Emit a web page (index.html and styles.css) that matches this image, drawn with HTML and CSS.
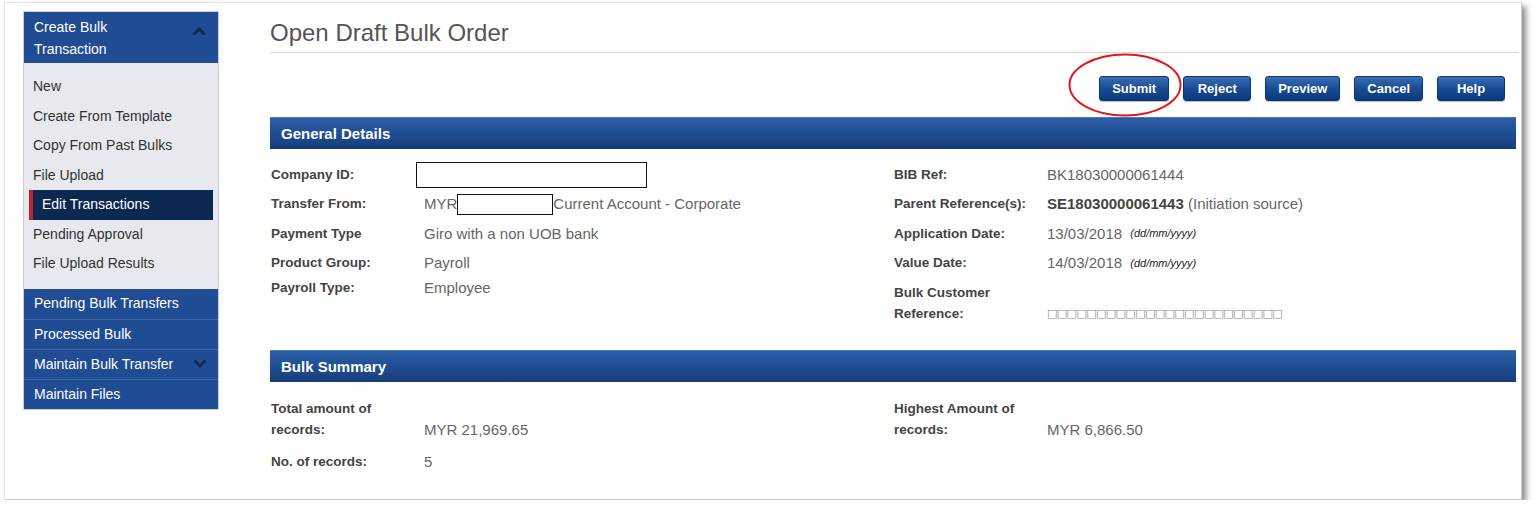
FILE: index.html
```html
<!DOCTYPE html>
<html lang="en">
<head>
  <meta charset="UTF-8">
  <title>Open Draft Bulk Order</title>
  <link rel="stylesheet" href="styles.css">
</head>
<body>
  <div class="frame">
    <aside class="sidebar">
      <div class="side-head">
        <span>Create Bulk Transaction</span>
        <svg class="chev" viewBox="0 0 14 9" width="14" height="9"><path d="M1.5 7.5 L7 2 L12.5 7.5" fill="none" stroke="#0b2850" stroke-width="2.8"/></svg>
      </div>
      <ul class="sub-menu">
        <li>New</li>
        <li>Create From Template</li>
        <li>Copy From Past Bulks</li>
        <li>File Upload</li>
        <li class="active">Edit Transactions</li>
        <li>Pending Approval</li>
        <li>File Upload Results</li>
      </ul>
      <ul class="main-menu">
        <li>Pending Bulk Transfers</li>
        <li>Processed Bulk</li>
        <li>Maintain Bulk Transfer <svg class="chev" viewBox="0 0 14 9" width="14" height="9"><path d="M1.5 1.5 L7 7 L12.5 1.5" fill="none" stroke="#0b2850" stroke-width="2.8"/></svg></li>
        <li>Maintain Files</li>
      </ul>
    </aside>

    <main class="content">
      <h1 class="page-title">Open Draft Bulk Order</h1>

      <div class="toolbar">
        <span class="marked">
          <button class="btn">Submit</button>
          <svg class="ring" viewBox="0 0 114 64" width="114" height="64"><ellipse cx="57" cy="32" rx="55.5" ry="30.5" fill="none" stroke="#e3161c" stroke-width="2"/></svg>
        </span>
        <button class="btn">Reject</button>
        <button class="btn">Preview</button>
        <button class="btn">Cancel</button>
        <button class="btn">Help</button>
      </div>

      <h2 class="bar">General Details</h2>
      <div class="cols">
        <div class="col">
          <div class="row r-first"><span class="lbl">Company ID:</span><span class="box box-id"></span></div>
          <div class="row"><span class="lbl">Transfer From:</span><span class="val">MYR<span class="box box-acc"></span>Current Account - Corporate</span></div>
          <div class="row"><span class="lbl">Payment Type</span><span class="val">Giro with a non UOB bank</span></div>
          <div class="row"><span class="lbl">Product Group:</span><span class="val">Payroll</span></div>
          <div class="row r-tight"><span class="lbl">Payroll Type:</span><span class="val">Employee</span></div>
        </div>
        <div class="col">
          <div class="row r-first"><span class="lbl">BIB Ref:</span><span class="val">BK18030000061444</span></div>
          <div class="row"><span class="lbl">Parent Reference(s):</span><span class="val"><b>SE18030000061443</b> (Initiation source)</span></div>
          <div class="row"><span class="lbl">Application Date:</span><span class="val">13/03/2018 <i class="fmt">(dd/mm/yyyy)</i></span></div>
          <div class="row"><span class="lbl">Value Date:</span><span class="val">14/03/2018 <i class="fmt">(dd/mm/yyyy)</i></span></div>
          <div class="row r-two"><span class="lbl">Bulk Customer Reference:</span><span class="val squares">□□□□□□□□□□□□□□□□□□□□□□□□</span></div>
        </div>
      </div>

      <h2 class="bar bar-sum">Bulk Summary</h2>
      <div class="cols">
        <div class="col">
          <div class="row r-two r-sum"><span class="lbl">Total amount of records:</span><span class="val">MYR 21,969.65</span></div>
          <div class="row r-count"><span class="lbl">No. of records:</span><span class="val">5</span></div>
        </div>
        <div class="col">
          <div class="row r-two r-sum"><span class="lbl">Highest Amount of records:</span><span class="val">MYR 6,866.50</span></div>
        </div>
      </div>
    </main>
  </div>
</body>
</html>
```

FILE: styles.css
```css
* { margin: 0; padding: 0; box-sizing: border-box; }
body { background: #fff; font-family: 'Liberation Sans', Arial, sans-serif; color: #444; }
.frame { position: relative; margin: 2px 0 0 4px; width: 1518px; height: 498px; border: 1px solid #e2e4e7; border-right-color: #c9cdd2; border-bottom-color: #c9cdd2; box-shadow: 4px 4px 6px rgba(0,0,0,0.45); display: flex; padding: 8px 5px 0 18px; }

.sidebar { width: 196px; flex: none; align-self: flex-start; border: 1px solid #c8cfdc; }
.side-head { background: #1f4c92; color: #fff; font-size: 14px; line-height: 22px; padding: 4px 50px 2px 10px; position: relative; height: 51px; }
.side-head .chev { position: absolute; right: 12px; top: 15px; }
.sub-menu { list-style: none; background: #e8e9ee; padding: 9px 5px 10px 5px; }
.sub-menu li { font-size: 14px; color: #333; height: 29.5px; line-height: 29.5px; padding-left: 4px; }
.sub-menu li.active { background: #0b2850; color: #fff; border-left: 4px solid #c8202a; padding-left: 9px; }
.main-menu { list-style: none; }
.main-menu li { background: #1f4c92; color: #fff; font-size: 14px; height: 30px; line-height: 29px; padding-left: 10px; border-top: 1px solid #3d67a6; position: relative; }
.main-menu li:first-child { border-top: 0; }
.main-menu .chev { position: absolute; right: 11px; top: 9px; }

.content { flex: 1; margin-left: 51px; }
.page-title { font-size: 24px; font-weight: normal; color: #555; line-height: 30px; padding-top: 7px; padding-bottom: 4px; border-bottom: 1px solid #d6d6d6; margin-right: -2px; }
.toolbar { display: flex; justify-content: flex-end; gap: 14px; padding: 23px 11px 0 0; height: 64px; }
.marked { position: relative; display: inline-block; height: 25px; }
.ring { position: absolute; left: -31px; top: -23px; pointer-events: none; }
.btn { height: 25px; min-width: 68px; padding: 0 12px; font-family: 'Liberation Sans', Arial, sans-serif; font-size: 13px; font-weight: bold; color: #fff; border: 1px solid #0b376f; border-radius: 3px; background: linear-gradient(#3a6db3, #184c94 50%, #0b3a7b); box-shadow: 0 1px 1px rgba(0,0,0,0.25); }

.bar { height: 32px; line-height: 31px; padding-left: 11px; font-size: 15px; font-weight: bold; color: #fff; background: linear-gradient(#2c5ea8, #1f4c91 55%, #173d78); border-top: 1px solid #4a79bd; }
.bar-sum { margin-top: 26px; }

.cols { display: flex; }
.col { width: 50%; }
.row { display: flex; align-items: center; height: 29.5px; }
.r-first { margin-top: 11px; height: 29px; }
.r-tight { height: 20px; }
.lbl { width: 154px; flex: none; padding-left: 1px; font-size: 13.5px; font-weight: bold; color: #444; line-height: 21px; }
.val { font-size: 15px; color: #666; display: flex; align-items: center; white-space: pre; }
.val b { color: #444; }
.fmt { font-size: 11px; color: #222; margin-left: 4px; }
.box { display: inline-block; background: #fff; border: 1px solid #111; }
.box-id { width: 231px; height: 26px; margin-left: -8px; margin-top: 1px; }
.box-acc { width: 96px; height: 21px; margin-top: 1px; }
.r-two { height: 42px; align-items: flex-end; margin-top: 4px; }
.r-two .val { line-height: 21px; }
.squares { font-size: 11px; letter-spacing: -0.6px; color: #888; font-family: 'DejaVu Sans', sans-serif; }
.r-sum { margin-top: 16px; }
.r-count { height: 24px; margin-top: 10px; }
```
